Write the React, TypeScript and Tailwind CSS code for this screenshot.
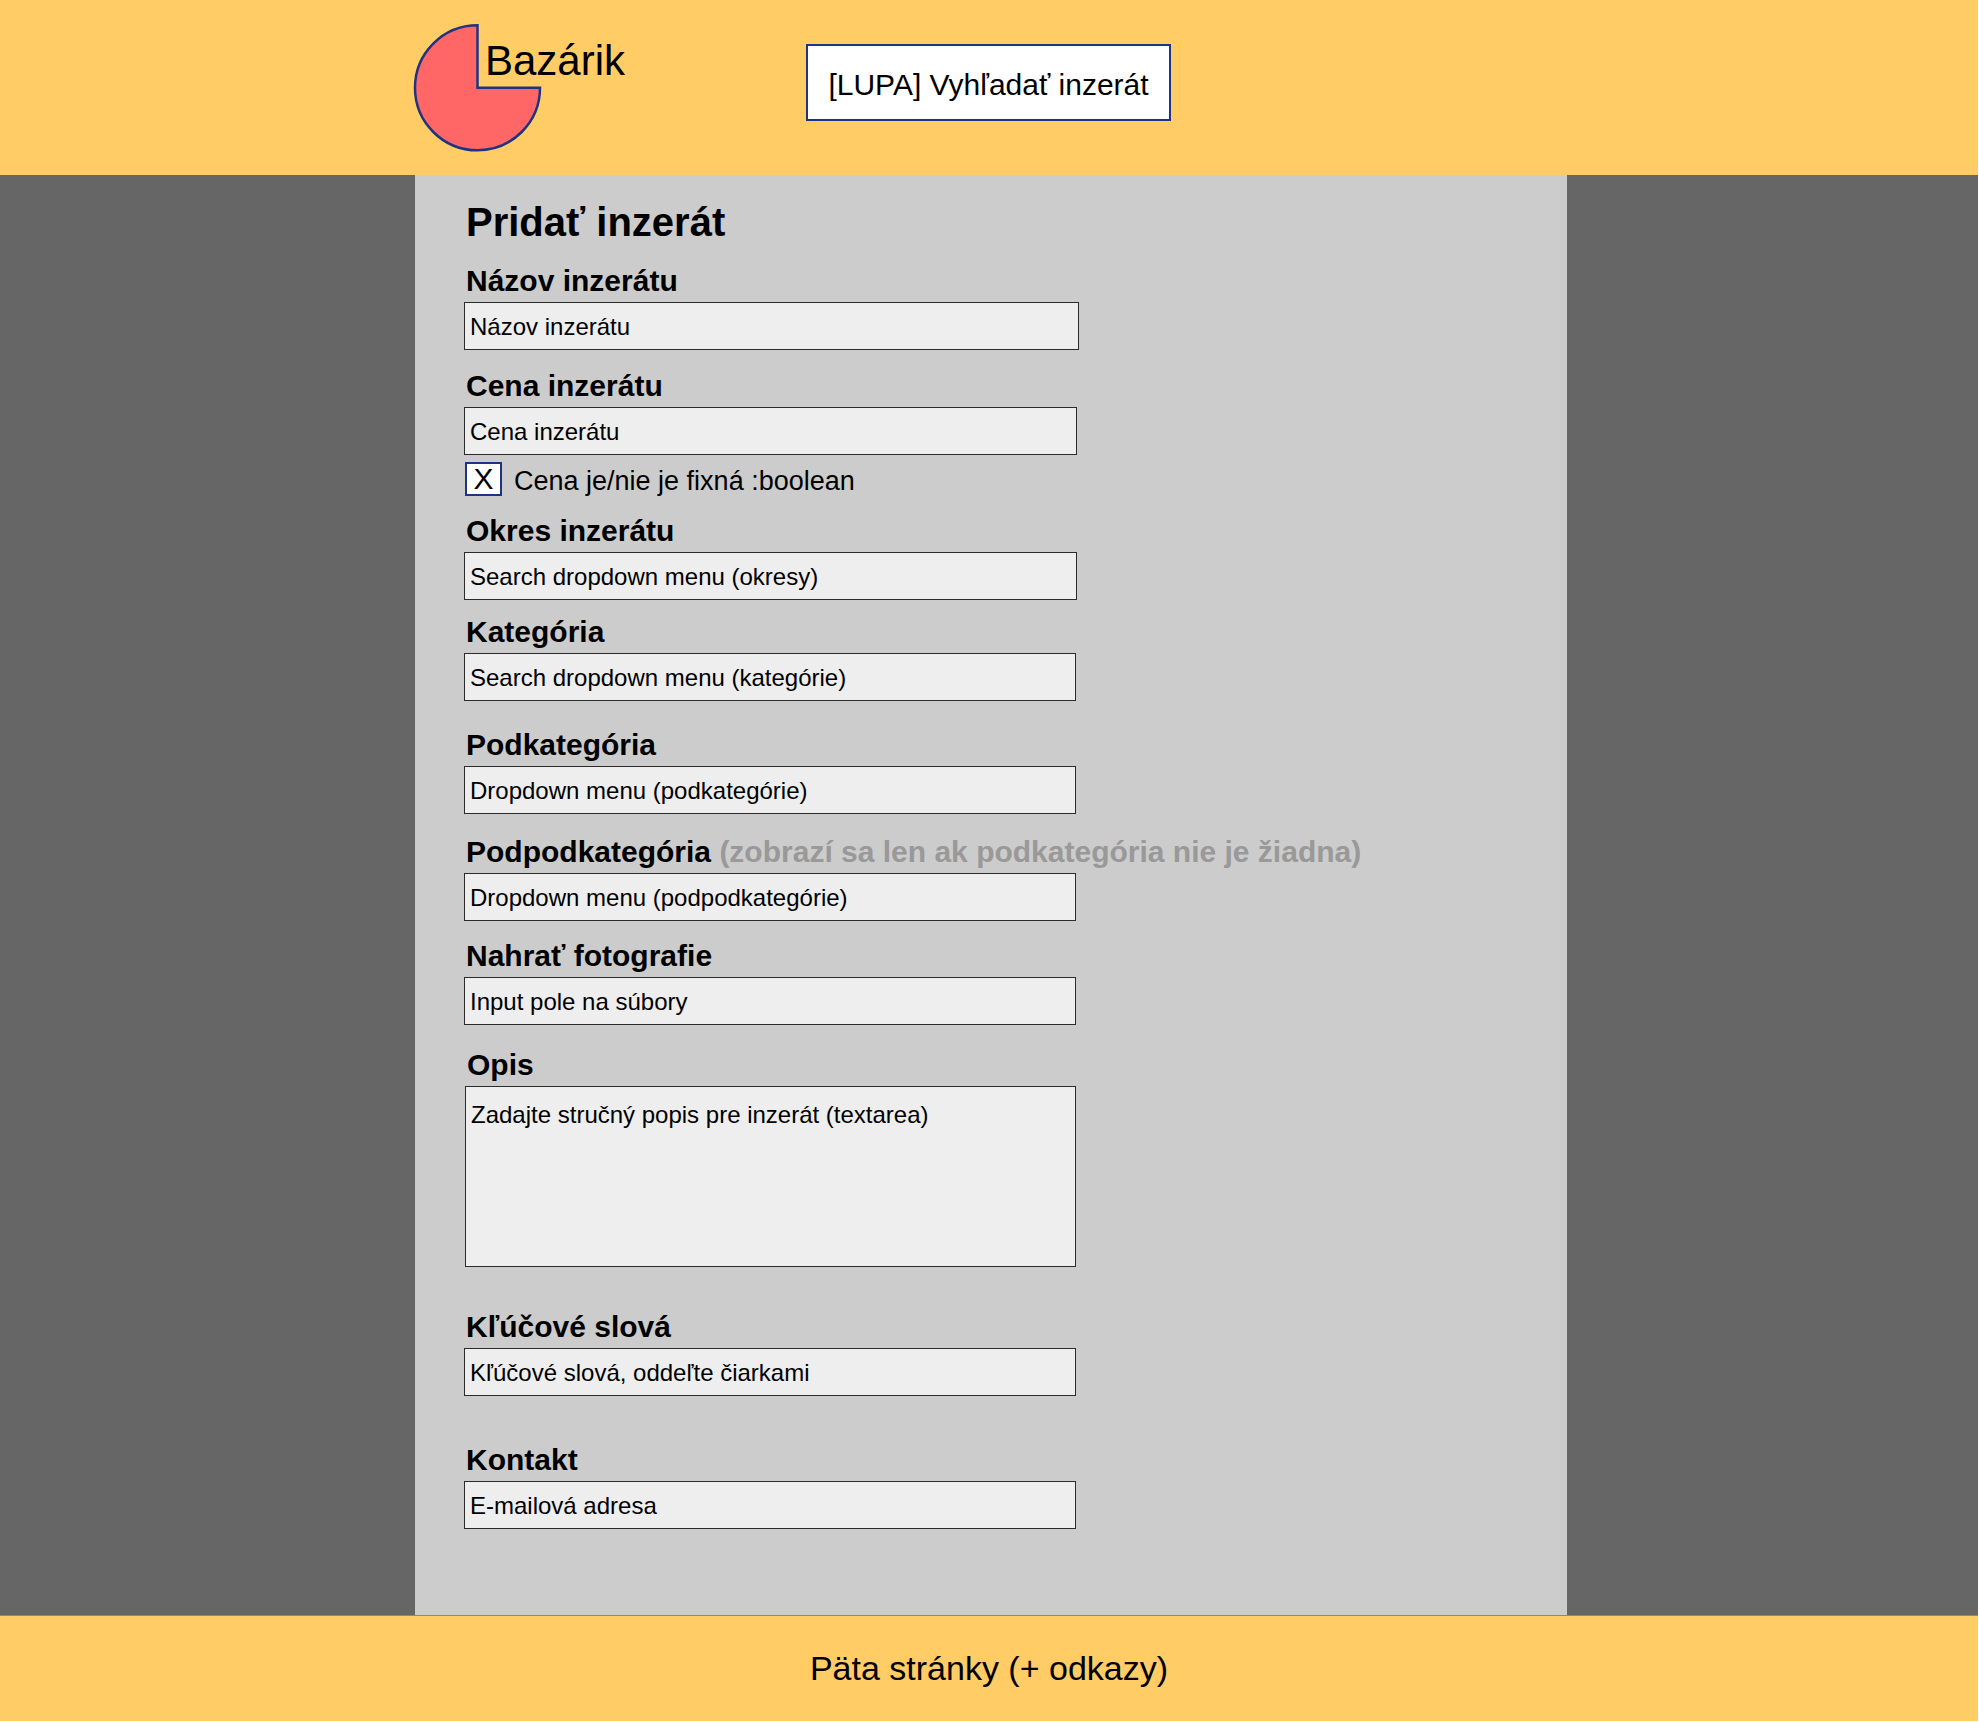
import type { ReactNode } from 'react';

const boxClass =
  'block h-12 w-full appearance-none rounded-none border border-[#2b2b2b] bg-[#eeeeee] px-[5px] pt-0.5 text-2xl leading-8 text-black outline-none';

type FieldProps = {
  id: string;
  label: string;
  note?: string;
  className: string;
  children: ReactNode;
};

function Field({ id, label, note, className, children }: FieldProps) {
  return (
    <div className={className}>
      <label
        htmlFor={id}
        className="block pl-0.5 text-[30px] leading-[42px] font-bold whitespace-nowrap"
      >
        {label}
        {note && <span className="text-[#999999]"> {note}</span>}
      </label>
      {children}
    </div>
  );
}

function Dropdown({ id, text }: { id: string; text: string }) {
  return (
    <select id={id} className={boxClass}>
      <option>{text}</option>
    </select>
  );
}

function Logo() {
  return (
    <a href="#" className="relative block h-[126px] w-[126px] shrink-0">
      <svg viewBox="0 0 126 126" className="block h-full w-full overflow-visible" aria-hidden="true">
        <path
          d="M62.5 62.8H125A62.5 62.5 0 1 1 62.5 0.3Z"
          fill="#ff6666"
          stroke="#1d3484"
          strokeWidth="2.5"
        />
      </svg>
      <span className="absolute top-3 left-[70px] text-[42px] leading-[48px]">Bazárik</span>
    </a>
  );
}

export default function App() {
  return (
    <div className="bg-white pr-px font-['Liberation_Sans',Arial,sans-serif] text-black">
      <header className="grid grid-cols-[415fr_1152fr_411fr] bg-[#ffcc66]">
        <div className="col-start-2 flex items-start pt-[25px] pb-6">
          <Logo />
          <input
            type="search"
            aria-label="Vyhľadať inzerát"
            defaultValue="[LUPA] Vyhľadať inzerát"
            className="mt-[19px] ml-[265px] h-[77px] w-[365px] appearance-none rounded-none border-2 border-[#1d3484] bg-white pt-1 text-center text-[30px] outline-none [&::-webkit-search-cancel-button]:hidden"
          />
        </div>
      </header>

      <main className="grid grid-cols-[415fr_1152fr_411fr] bg-[#666666]">
        <form className="col-start-2 bg-[#cccccc] pt-[23px] pr-12 pb-[86px] pl-[49px]">
          <h1 className="pl-0.5 text-[40px] leading-[48px] font-bold">Pridať inzerát</h1>

          <div className="max-w-[612px]">
            <Field id="title" label="Názov inzerátu" className="mt-3.5 -mr-[3px]">
              <input id="title" type="text" defaultValue="Názov inzerátu" className={boxClass} />
            </Field>

            <Field id="price" label="Cena inzerátu" className="mt-[15px] -mr-px">
              <input id="price" type="text" defaultValue="Cena inzerátu" className={boxClass} />
            </Field>

            <div className="mt-[7px] flex items-center gap-3 pl-px">
              <span className="grid h-[34px] w-[37px] shrink-0 place-items-center">
                <input
                  id="fixed"
                  type="checkbox"
                  defaultChecked
                  className="peer col-start-1 row-start-1 h-full w-full appearance-none border-2 border-[#1d3484] bg-white"
                />
                <span
                  aria-hidden="true"
                  className="pointer-events-none invisible col-start-1 row-start-1 text-[30px] leading-[32px] peer-checked:visible"
                >
                  X
                </span>
              </span>
              <label
                htmlFor="fixed"
                className="pt-1 text-[27px] leading-[30px] whitespace-nowrap"
              >
                Cena je/nie je fixná :boolean
              </label>
            </div>

            <Field id="district" label="Okres inzerátu" className="mt-3.5 -mr-px">
              <Dropdown id="district" text="Search dropdown menu (okresy)" />
            </Field>

            <Field id="category" label="Kategória" className="mt-[11px]">
              <Dropdown id="category" text="Search dropdown menu (kategórie)" />
            </Field>

            <Field id="subcategory" label="Podkategória" className="mt-[23px]">
              <Dropdown id="subcategory" text="Dropdown menu (podkategórie)" />
            </Field>

            <Field
              id="subsubcategory"
              label="Podpodkategória"
              note="(zobrazí sa len ak podkategória nie je žiadna)"
              className="mt-[17px]"
            >
              <Dropdown id="subsubcategory" text="Dropdown menu (podpodkategórie)" />
            </Field>

            <Field id="photos" label="Nahrať fotografie" className="mt-3.5">
              <label
                htmlFor="photos"
                className="relative flex h-12 items-center border border-[#2b2b2b] bg-[#eeeeee] px-[5px] pt-0.5 text-2xl leading-8"
              >
                Input pole na súbory
                <input id="photos" type="file" multiple className="sr-only" />
              </label>
            </Field>

            <Field id="description" label="Opis" className="mt-[19px] pl-px">
              <textarea
                id="description"
                defaultValue="Zadajte stručný popis pre inzerát (textarea)"
                className="block h-[181px] w-full resize-none rounded-none border border-[#2b2b2b] bg-[#eeeeee] px-[5px] py-3 text-2xl leading-8 outline-none"
              />
            </Field>

            <Field id="keywords" label="Kľúčové slová" className="mt-[39px]">
              <input
                id="keywords"
                type="text"
                defaultValue="Kľúčové slová, oddeľte čiarkami"
                className={boxClass}
              />
            </Field>

            <Field id="contact" label="Kontakt" className="mt-[43px]">
              <input id="contact" type="text" defaultValue="E-mailová adresa" className={boxClass} />
            </Field>
          </div>
        </form>
      </main>

      <footer className="border-t border-[#998866] bg-[#ffcc66] py-8 text-center text-[34px] leading-[41px]">
        Päta stránky (+ odkazy)
      </footer>
    </div>
  );
}
